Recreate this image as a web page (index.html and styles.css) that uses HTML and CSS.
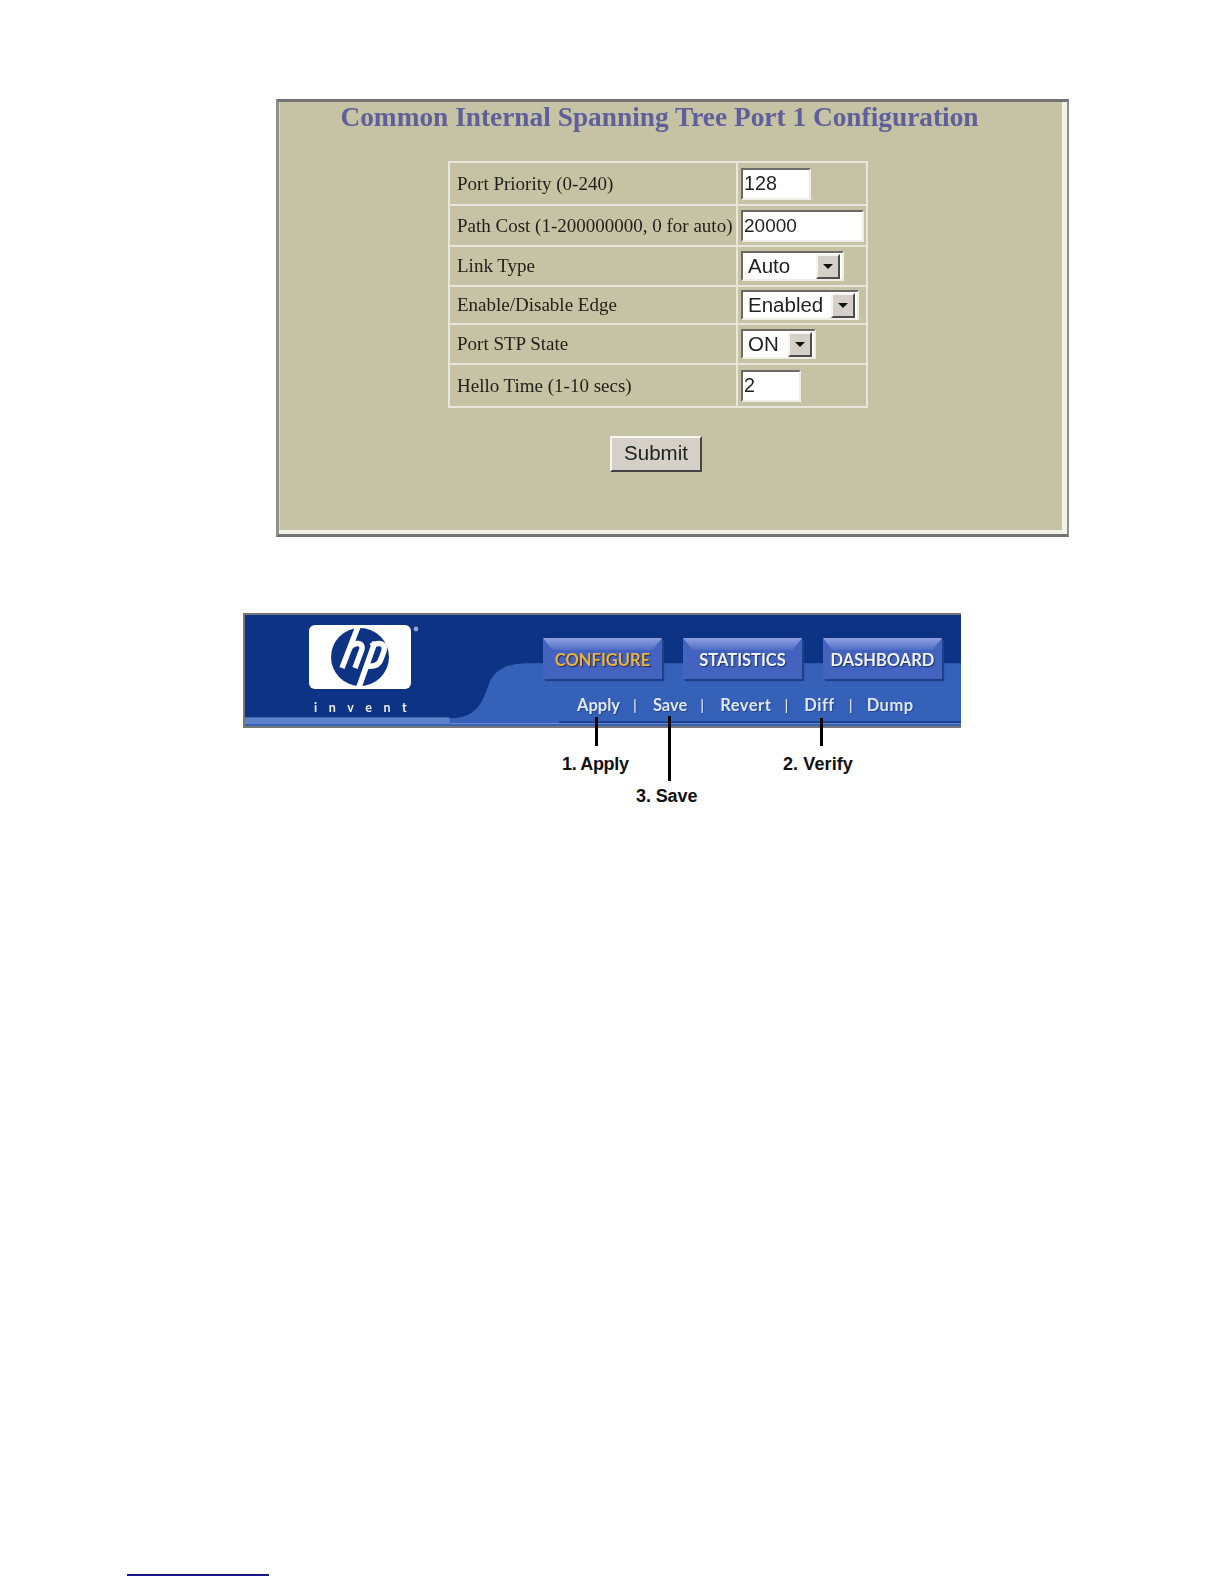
FILE: index.html
```html
<!DOCTYPE html>
<html lang="en">
<head>
<meta charset="utf-8">
<title>Common Internal Spanning Tree Port 1 Configuration</title>
<link rel="stylesheet" href="styles.css">
</head>
<body>
<section class="panel">
  <h1 class="title">Common Internal Spanning Tree Port 1 Configuration</h1>
  <table class="config">
    <tr class="r1"><td class="label">Port Priority (0-240)</td><td class="field"><input class="text w-priority" value="128"></td></tr>
    <tr class="r2"><td class="label">Path Cost (1-200000000, 0 for auto)</td><td class="field"><input class="text w-cost" value="20000"></td></tr>
    <tr class="r3"><td class="label">Link Type</td><td class="field"><div class="select w-link"><span class="value">Auto</span><span class="arrow"></span></div></td></tr>
    <tr class="r4"><td class="label">Enable/Disable Edge</td><td class="field"><div class="select w-edge"><span class="value">Enabled</span><span class="arrow"></span></div></td></tr>
    <tr class="r5"><td class="label">Port STP State</td><td class="field"><div class="select w-stp"><span class="value">ON</span><span class="arrow"></span></div></td></tr>
    <tr class="r6"><td class="label">Hello Time (1-10 secs)</td><td class="field"><input class="text w-hello" value="2"></td></tr>
  </table>
  <div class="actions"><button class="submit" type="button">Submit</button></div>
</section>

<figure class="figure">
  <div class="banner">
    <svg class="banner-bg" viewBox="0 0 718 115" preserveAspectRatio="none" aria-hidden="true">
      <rect width="718" height="115" fill="#0c3384"/>
      <path d="M205 107 C232 107 238 92 245 70 C252 56 262 50 285 50 L718 50 L718 115 L0 115 L0 107 Z" fill="#3561b9"/>
      <rect x="0" y="106" width="205" height="7" fill="#5f83c9"/>
      <rect x="315" y="110" width="403" height="2" fill="#1c3f8c"/>
      <rect x="205" y="112" width="513" height="1" fill="#6f8fcf"/>
    </svg>
    <div class="brand">
      <svg class="logo" viewBox="0 0 112 64" aria-label="hp logo">
        <rect width="102" height="64" rx="6" fill="#fff"/>
        <circle cx="51" cy="32" r="29" fill="#0c3384"/>
        <g fill="none" stroke="#fff" stroke-width="5.5">
          <path d="M50 -1 L33 43"/>
          <path d="M41 22 C46 17 54 17 53 24 L46 43"/>
          <path d="M66 17 L50 62"/>
          <path d="M62 21 C68 17 77 17 75 26 L72 34 C70 41 63 42 56 41"/>
        </g>
        <circle cx="107" cy="4" r="2.4" fill="#8fa5d5"/>
      </svg>
      <span class="invent">invent</span>
    </div>
    <div class="nav">
      <div class="tabs">
        <a class="tab active">CONFIGURE</a>
        <a class="tab">STATISTICS</a>
        <a class="tab">DASHBOARD</a>
      </div>
      <div class="links">
        <a class="apply">Apply</a><i>|</i><a class="save">Save</a><i>|</i><a class="revert">Revert</a><i>|</i><a class="diff">Diff</a><i>|</i><a class="dump">Dump</a>
      </div>
    </div>
  </div>
  <span class="line l-apply"></span>
  <span class="line l-save"></span>
  <span class="line l-diff"></span>
  <span class="note n-apply">1. Apply</span>
  <span class="note n-verify">2. Verify</span>
  <span class="note n-save">3. Save</span>
</figure>

<footer class="foot"><span class="rule"></span></footer>
</body>
</html>
```
FILE: styles.css
```css
* { box-sizing: border-box; }
html, body { margin: 0; padding: 0; background: #fff; }
body { height: 1584px; display: flex; flex-direction: column; align-items: flex-start; overflow: hidden; }

.panel {
  width: 793px; height: 438px; margin: 99px 0 0 276px;
  background: #c5c3a3;
  border-style: solid; border-width: 3px 2px 3px 3px;
  border-color: #737373 #8d8d8d #737373 #8f8f8f;
  box-shadow: inset -5px -4px 0 #f1f1e8, inset 1px 0 0 #d9d9cf;
  display: flex; flex-direction: column; align-items: center;
  padding-right: 30px;
  filter: blur(0.35px);
}
.title {
  margin: 0 0 0 3px; height: 59px;
  font: bold 27.35px/30px "Liberation Serif", serif;
  color: #5f5f9c; white-space: nowrap; letter-spacing: 0;
}
.config {
  width: 420px; border-collapse: collapse; table-layout: fixed;
  border: 2px solid #e6e6dd;
}
.config td { border: 2px solid #e6e6dd; padding: 0; }
.r1 { height: 43px; } .r2 { height: 41px; } .r3 { height: 40px; }
.r4 { height: 38px; } .r5 { height: 40px; } .r6 { height: 43px; }
.label {
  width: 288px; padding-left: 7px !important;
  font: 19px/22px "Liberation Serif", serif; color: #1f1f1a; white-space: nowrap;
}
.field { padding-left: 3px !important; }
.text, .select {
  display: block; height: 32px; background: #fff;
  border: 2px solid; border-color: #6a6a66 #eeeee6 #eeeee6 #6a6a66;
  color: #222;
}
.text { padding: 0 1px; outline: 0; border-radius: 0; font: 19.8px/28px "Liberation Sans", sans-serif; }
.w-cost { font-size: 19px; }
.w-priority { width: 70px; } .w-cost { width: 123px; } .w-hello { width: 60px; }
.select {
  display: flex; align-items: center; justify-content: space-between;
  padding: 0 2px 0 5px; height: 30px;
  font: 20.5px/28px "Liberation Sans", sans-serif;
}
.w-link { width: 103px; } .w-edge { width: 118px; } .w-stp { width: 75px; }
.arrow {
  width: 24px; height: 25px; background: #d4d0c8; flex: none; position: relative;
  border: 2px solid; border-color: #f4f4f0 #4c4c4c #4c4c4c #f4f4f0;
}
.arrow::after {
  content: ""; position: absolute; left: 5px; top: 8px;
  border: 5px solid transparent; border-top: 5px solid #111; border-bottom: 0;
}
.actions { width: 420px; display: flex; padding: 28px 0 0 0; justify-content: center; }
.submit {
  width: 92px; height: 36px; margin-left: -4px; padding: 0 0 2px;
  background: #d4d0c8; color: #222;
  border: 2px solid; border-color: #f6f6f0 #444 #444 #f6f6f0;
  font: 20.5px/28px "Liberation Sans", sans-serif;
}

.figure { position: relative; width: 800px; height: 200px; margin: 76px 0 0 243px; }
.banner {
  position: relative; width: 718px; height: 115px; overflow: hidden;
  border-top: 2px solid #777; border-left: 2px solid #777; border-bottom: 2px solid #777;
  display: flex; filter: blur(0.4px);
}
.banner-bg { position: absolute; inset: 0; width: 100%; height: 100%; }
.brand { position: relative; width: 298px; padding: 10px 0 0 64px; display: flex; flex-direction: column; }
.logo { width: 112px; height: 64px; display: block; flex: none; }
.invent {
  margin-top: 10px; padding-left: 5px;
  font: bold 12.5px/18px "Lato", sans-serif; color: #eef2fa; letter-spacing: 11.6px; white-space: nowrap;
}
.nav { position: relative; display: flex; flex-direction: column; }
.tabs { display: flex; gap: 21px; padding-top: 23px; }
.tab {
  position: relative;
  width: 119px; height: 41px; padding-top: 3px; display: flex; align-items: center; justify-content: center;
  background: #4363bf;
  box-shadow: 2px 2px 1px #1f3f88;
  font: bold 16.5px/20px "Lato", sans-serif; color: #f1f3f8;
  text-shadow: 1px 1px 1px #16306f;
}
.tab::before {
  content: ""; position: absolute; left: 0; right: 0; top: 0; height: 12px;
  background: linear-gradient(#90a0e0, #4f6dc6);
  clip-path: polygon(0 0, 100% 0, 92% 100%, 8% 100%);
}
.tab.active { color: #e7b347; text-shadow: 1px 1px 1px #2a2a50; }
.links {
  display: flex; align-items: center; height: 22px; margin-top: 15px; padding-left: 34px;
  font: bold 16.5px/22px "Lato", sans-serif; color: #dfe6f6; text-shadow: 1px 1px 1px #23458f;
}
.links i { font: normal 15px/20px "Liberation Sans", sans-serif; color: #dfe6f6; }
.apply { margin-right: 13px; } .save { margin: 0 13px 0 16px; }
.revert { margin: 0 13px 0 16px; letter-spacing: 0.5px; }
.diff { margin: 0 14px 0 16px; letter-spacing: 0.5px; }
.dump { margin-left: 14px; letter-spacing: 0.5px; }

.line { position: absolute; width: 3px; background: #000; }
.l-apply { left: 352px; top: 104px; height: 29px; }
.l-save { left: 425px; top: 103px; height: 65px; }
.l-diff { left: 577px; top: 105px; height: 28px; }
.note {
  position: absolute; font: bold 18px/22px "Liberation Sans", sans-serif;
  color: #111; letter-spacing: -0.35px; white-space: nowrap;
}
.n-apply { left: 319px; top: 140px; }
.n-verify { left: 540px; top: 140px; letter-spacing: 0.1px; }
.n-save { left: 393px; top: 172px; letter-spacing: -0.1px; }

.foot { margin-top: auto; padding: 0 0 8px 127px; }
.rule { display: block; width: 142px; height: 2px; background: #17178f; }
```
